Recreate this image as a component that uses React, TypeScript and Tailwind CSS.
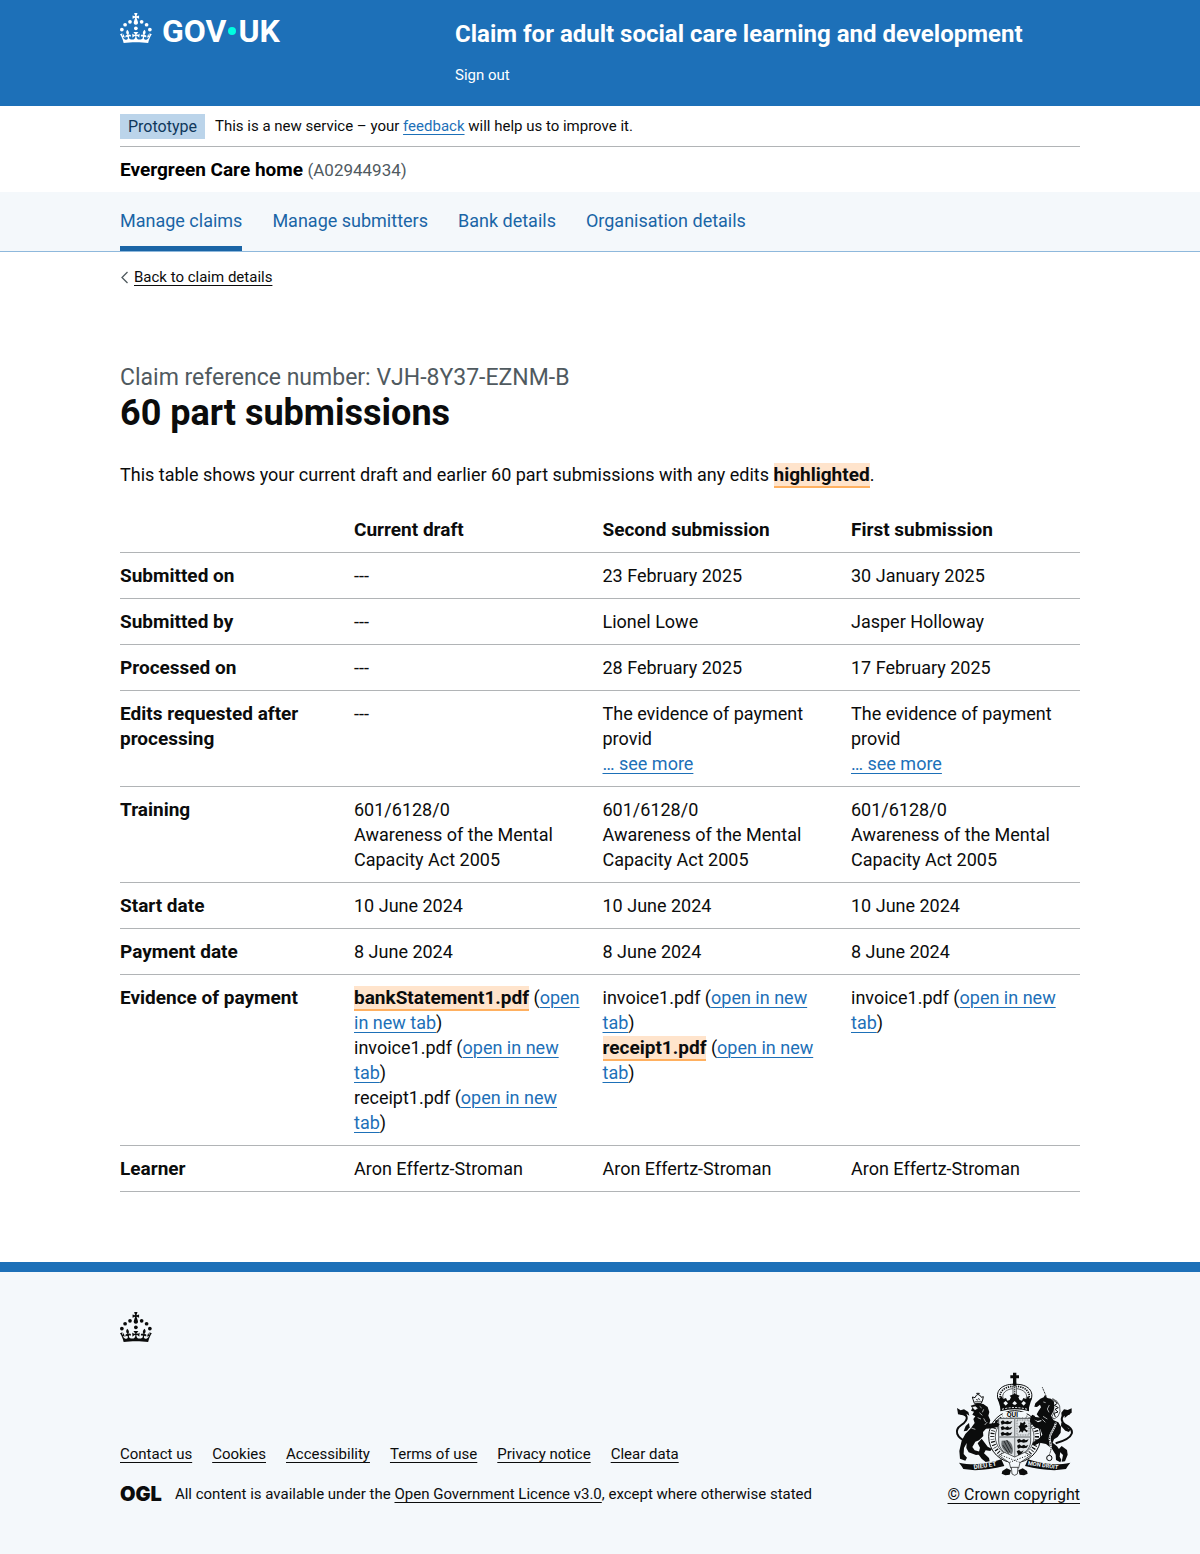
import React from 'react';

const CROWN_PATH =
  'M33.1,9.8c.2-.1.3-.3.5-.5l4.6,2.4v-6.8l-4.6,1.5c-.1-.2-.3-.3-.5-.5l1.9-5.9h-6.7l1.9,5.9c-.2.1-.3.3-.5.5l-4.6-1.5v6.8l4.6-2.4c.1.2.3.3.5.5l-2.6,8c-.9,2.8,1.2,5.7,4.1,5.7h0c3,0,5.1-2.9,4.1-5.7l-2.6-8ZM37,37.9s-3.4,3.8-4.1,6.1c2.2,0,4.2-.5,6.4-2.8l-.7,8.5c-2-2.8-4.4-4.1-5.7-3.8.1,3.1.5,6.7,5.8,7.2,3.7.3,6.7-1.5,7-3.8.4-2.6-2-4.3-3.7-1.6-1.4-4.5,2.4-6.1,4.9-3.2-1.9-4.5-1.8-7.7,2.4-10.9,3,4,2.6,7.3-1.2,11.1,2.4-1.3,6.2,0,4,4.6-1.2-2.8-3.7-2.2-4.2.2-.3,1.7.7,3.7,3,4.2,1.9.3,4.7-.9,7-5.9-1.3,0-2.4.7-3.9,1.7l2.4-8c.6,2.3,1.4,3.7,2.2,4.5.6-1.6.5-2.8,0-5.3l5,1.8c-2.6,3.6-5.2,8.7-7.3,17.5-7.4-1.1-15.7-1.7-24.5-1.7h0c-8.8,0-17.1.6-24.5,1.7-2.1-8.9-4.7-13.9-7.3-17.5l5-1.8c-.5,2.5-.6,3.7,0,5.3.8-.8,1.6-2.3,2.2-4.5l2.4,8c-1.5-1-2.6-1.7-3.9-1.7,2.3,5,5.2,6.2,7,5.9,2.3-.4,3.3-2.4,3-4.2-.5-2.4-3-3.1-4.2-.2-2.2-4.6,1.6-6,4-4.6-3.7-3.7-4.2-7.1-1.2-11.1,4.2,3.2,4.3,6.4,2.4,10.9,2.5-2.8,6.3-1.3,4.9,3.2-1.8-2.7-4.1-1-3.7,1.6.3,2.3,3.3,4.1,7,3.8,5.4-.5,5.7-4.2,5.8-7.2-1.3-.2-3.7,1-5.7,3.8l-.7-8.5c2.2,2.3,4.2,2.7,6.4,2.8-.7-2.3-4.1-6.1-4.1-6.1h10.6,0Z';

function Crown() {
  return (
    <svg viewBox="0 0 64 60" className="block h-[30px] w-8 shrink-0" fill="currentColor" aria-hidden="true">
      <circle cx="20" cy="17.6" r="3.7" />
      <circle cx="10.2" cy="23.5" r="3.7" />
      <circle cx="3.7" cy="33.2" r="3.7" />
      <circle cx="31.7" cy="30.6" r="3.7" />
      <circle cx="43.3" cy="17.6" r="3.7" />
      <circle cx="53.2" cy="23.5" r="3.7" />
      <circle cx="59.7" cy="33.2" r="3.7" />
      <path d={CROWN_PATH} />
    </svg>
  );
}

function CoatOfArms() {
  return (
    <svg viewBox="30 15 360 315" className="block h-[105px] w-[120px]" fill="#0b0c0c" aria-hidden="true">
      {/* garter */}
      <circle cx="212" cy="212" r="78" fill="#f4f8fb" stroke="#0b0c0c" strokeWidth="3" />
      <circle cx="212" cy="212" r="67" fill="none" stroke="#0b0c0c" strokeWidth="12" strokeDasharray="3 6 4 5 2 6" />
      <circle cx="212" cy="212" r="58" fill="#f4f8fb" stroke="#0b0c0c" strokeWidth="2" />
      <path d="M176 138h72v17h-72z" fill="#f4f8fb" />
      <text x="188" y="153" fontSize="21" fontWeight="700" fontFamily="Roboto, sans-serif">QUI</text>
      {/* shield */}
      <path d="M164 157h96v68c0 26-22 40-48 52-26-12-48-26-48-52z" fill="#dfe3e6" stroke="#55595c" strokeWidth="3" />
      <path d="M212 157v120M164 213h96" stroke="#8d9194" strokeWidth="4" />
      <path d="M170 167l7-4 6 5 8-4 5 4 9-3-5 8-10 2-8-2-9 3zM170 184l7-4 6 5 8-4 5 4 9-3-5 8-10 2-8-2-9 3zM170 201l7-4 6 5 8-4 5 4 9-3-5 8-10 2-8-2-9 3z" />
      <path d="M219 222l7-4 6 5 8-4 5 4 9-3-5 8-10 2-8-2-9 3zM219 239l7-4 6 5 8-4 5 4 8-3-5 8-10 2-8-2-8 3zM218 256l7-4 6 5 8-4-7 12-8 4z" />
      <path d="M219 162h36v45h-36z" fill="none" stroke="#55595c" strokeWidth="2" strokeDasharray="3 2" />
      <path d="M224 201l4-11-5-9 5-3 1-9 8 3 4-6 4 6-4 6 7-2 3 6-8 4 3 5 6 3-4 5-8-6-5 7-4-4z" />
      <path d="M173 224q-5 20 12 33l19 8q5-10 2-20-2-16-16-22z" fill="#6c7174" />
      <path d="M180 225l18 34M188 222l15 28M176 237l18 26" stroke="#25282a" strokeWidth="3" />
      {/* crown */}
      <path d="M207 20h10v8h8v9h-8v14h-10V37h-8v-9h8z" />
      <circle cx="212" cy="54" r="6" />
      <path d="M165 106C150 76 174 54 208 55M259 106c15-30-9-52-43-51" fill="none" stroke="#0b0c0c" strokeWidth="3" />
      <path d="M171 101C161 80 180 62 207 61M253 101c10-21-9-39-36-40" fill="none" stroke="#0b0c0c" strokeWidth="5" strokeDasharray="4 3" />
      <path d="M178 98C171 83 186 70 206 68M246 98c7-15-8-28-28-30" fill="none" stroke="#0b0c0c" strokeWidth="2" />
      <path d="M207 60h10v42h-10z" fill="#f4f8fb" stroke="#0b0c0c" strokeWidth="2" />
      <path d="M212 62v40" stroke="#0b0c0c" strokeWidth="4" strokeDasharray="3 3" />
      <path d="M160 94l7 4 5-8 6 9 8-3 4 8 7-2 4-8-4-5 15-6 15 6-4 5 4 8 7 2 4-8 8 3 6-9 5 8 7-4-10 34H170z" />
      <path d="M178 111l7-6 7 7-7 7zM205 112l7-7 7 7-7 7zM232 112l7-7 7 6-7 8z" fill="#f4f8fb" />
      <path d="M169 123q43-13 86 0v13q-43-12-86 0z" />
      <path d="M174 130q38-11 76 0" fill="none" stroke="#f4f8fb" strokeWidth="3" strokeDasharray="6 4" />
      {/* lion */}
      <path d="M91 112l-4-12-2-7 8 2 4-7 4-2-3-4h8l-3 4 6 3 3 5 6-2-2 10-4 10z" fill="none" stroke="#0b0c0c" strokeWidth="3" />
      <path d="M92 107h22M96 99l4 4 4-6 4 6" fill="none" stroke="#0b0c0c" strokeWidth="2" />
      <path d="M87 117l14-5 17 2 13 9 5 15-3 11 6 14-3 10 16-2 3-9 8 1-3 7 7 5-6 8-15 4-20 1-9 10 1 12-13 13-11 4-9 16 7 10 16 4 9-2-2 10-19 2-22-8-7-13 1-15-8 15-1 18 10 11-5 9-16-6-2-23 7-31 11-20 17-18 11-15-4-12 6-8-9-5 5-9-9-3 4-8-5-7z" />
      <path d="M82 186l12 4M86 124l8-2 6 5-7 4zM107 121l6 5M119 130l-4 9M106 140l9 8M101 155l10 4M119 157l6 11M122 177l8-9" stroke="#f4f8fb" strokeWidth="2" fill="#f4f8fb" />
      <path d="M74 230C34 215 30 192 52 177c26-18 18-35-4-35" fill="none" stroke="#0b0c0c" strokeWidth="6" />
      <path d="M39 126l11 7 10-3 13 8 3 11-9-6 2 11-12-6-15-3-1-8z" />
      <path d="M65 180l10-9 2 13-8 10-10 2z" />
      <path d="M113 218l18 24 13 7-5 6-14-2-5 9 15 14 2 10-12 2-12-10-10-13 5-20-7-13z" />
      {/* unicorn */}
      <path d="M295 64l18 42" stroke="#0b0c0c" strokeWidth="3" strokeDasharray="3 2" />
      <path d="M326 98l13 8 8 14 1 17-6 14-12 8-6-7 6-14-2-18z" fill="#f4f8fb" stroke="#0b0c0c" strokeWidth="2" />
      <path d="M328 102l12 10-9 6 12 7-10 5 9 8-12 4 4 11" fill="none" stroke="#0b0c0c" strokeWidth="3" />
      <path d="M289 98l10-4 4-7 6 9 12 2 9 9 1 18-4 13-6 11 8 14 14 6 8 13-1 18-9 13-11 7-4 10 13 11 10 14-2 17 5 9-3 8-13-7-1-16-11-18-18-14-19-4-14 8-9-2 4-8 16-10 11-12-6-16-19-8-12-15 1-13 6-8 8 4-3 11 12 8 11-4-8-12-7-8 6-11 7-10-3-8-9 7-8-1 3-10z" />
      <path d="M298 108l7 2M316 117l-6 12 5 10M292 157l12 12M297 151l13 8" fill="none" stroke="#f4f8fb" strokeWidth="2" />
      <path d="M265 149l10 4 17 2 4 6-15 4-13-5z" />
      <path d="M335 232C396 215 392 191 365 177c-20-14-13-34 12-34" fill="none" stroke="#0b0c0c" strokeWidth="6" />
      <path d="M383 127l-12 5-11-2-8 10 1 13 9-9v12l11-9 10-7z" />
      <path d="M351 180l1-11 14 8 8 11 8-1-7 11-11-4z" />
      <path d="M336 170c-5 25-26 35-17 60 5 18 1 25-3 36" fill="none" stroke="#f4f8fb" strokeWidth="6" />
      <path d="M336 170c-5 25-26 35-17 60 5 18 1 25-3 36" fill="none" stroke="#0b0c0c" strokeWidth="3" strokeDasharray="4 3" />
      <circle cx="316" cy="276" r="8" fill="none" stroke="#0b0c0c" strokeWidth="3" />
      <path d="M353 240l16 12 2 14-8 20-10 1 4-20-15-15z" />
      {/* belt end */}
      <path d="M164 268l18-9 30 14 30-14 18 9-32 22-4 16h-24l-4-16z" fill="#f4f8fb" stroke="#0b0c0c" strokeWidth="2" />
      <path d="M172 268l60 23M252 268l-60 23" stroke="#0b0c0c" strokeWidth="3" strokeDasharray="3 5" />
      {/* motto scroll */}
      <path d="M45 290c44 9 88 4 127-10l9 20c-31 8-60 11-88 13l-35-4-5-8z" />
      <path d="M379 290c-44 9-88 4-127-10l-9 20c31 8 60 11 88 13l35-4 5-8z" />
      <text x="90" y="310" fontSize="19" fontWeight="700" fill="#f4f8fb" fontFamily="Roboto, sans-serif" transform="rotate(-9 90 310)">DIEU ET</text>
      <text x="251" y="297" fontSize="17" fontWeight="700" fill="#f4f8fb" fontFamily="Roboto, sans-serif" transform="rotate(8 251 297)">MON DROIT</text>
      <path d="M175 315l13-8 13 6-4 13-13 2-11-5zM249 315l-13-8-13 6 4 13 13 2 11-5z" />
      <path d="M202 304h20l-2 20-8 4-8-4z" fill="#f4f8fb" stroke="#0b0c0c" strokeWidth="2" />
    </svg>
  );
}

const container = 'mx-auto w-full max-w-[960px]';
const blueLink = 'text-[#1d70b8] underline decoration-1 underline-offset-3';
const darkLink = 'text-[#0b0c0c] underline decoration-1 underline-offset-3';

function Mark({ children }: { children: React.ReactNode }) {
  return (
    <mark className="border-b-2 border-[#ffb060] bg-[#ffe4cc] text-[19px] font-bold text-[#0b0c0c]">{children}</mark>
  );
}

function Evidence({ name, changed }: { name: string; changed?: boolean }) {
  return (
    <div>
      {changed ? <Mark>{name}</Mark> : name} (
      <a href="#open" className={blueLink}>
        open in new tab
      </a>
      )
    </div>
  );
}

function EditsRequested() {
  return (
    <>
      <div>The evidence of payment provid</div>
      <a href="#more" className={blueLink}>
        … see more
      </a>
    </>
  );
}

const training = (
  <>
    <div>601/6128/0</div>
    <div>Awareness of the Mental Capacity Act 2005</div>
  </>
);

const rows: { label: string; cells: React.ReactNode[] }[] = [
  { label: 'Submitted on', cells: ['---', '23 February 2025', '30 January 2025'] },
  { label: 'Submitted by', cells: ['---', 'Lionel Lowe', 'Jasper Holloway'] },
  { label: 'Processed on', cells: ['---', '28 February 2025', '17 February 2025'] },
  { label: 'Edits requested after processing', cells: ['---', <EditsRequested />, <EditsRequested />] },
  { label: 'Training', cells: [training, training, training] },
  { label: 'Start date', cells: ['10 June 2024', '10 June 2024', '10 June 2024'] },
  { label: 'Payment date', cells: ['8 June 2024', '8 June 2024', '8 June 2024'] },
  {
    label: 'Evidence of payment',
    cells: [
      <>
        <Evidence name="bankStatement1.pdf" changed />
        <Evidence name="invoice1.pdf" />
        <Evidence name="receipt1.pdf" />
      </>,
      <>
        <Evidence name="invoice1.pdf" />
        <Evidence name="receipt1.pdf" changed />
      </>,
      <Evidence name="invoice1.pdf" />,
    ],
  },
  { label: 'Learner', cells: ['Aron Effertz-Stroman', 'Aron Effertz-Stroman', 'Aron Effertz-Stroman'] },
];

const navItems = ['Manage claims', 'Manage submitters', 'Bank details', 'Organisation details'];
const footerLinks = ['Contact us', 'Cookies', 'Accessibility', 'Terms of use', 'Privacy notice', 'Clear data'];

export default function App() {
  return (
    <div className="bg-white font-['Roboto',sans-serif] text-lg leading-[25px] text-[#0b0c0c]">
      <header className="bg-[#1d70b8] text-white">
        <div className={`${container} flex items-start pt-[13px] pb-[18px]`}>
          <div className="w-1/3">
            <a href="#home" aria-label="GOV.UK" className="flex items-center gap-[10px]">
              <Crown />
              <span className="flex h-[30px] items-center pt-[6px] text-[32px] leading-[30px] font-bold">
                GOV
                <span className="mx-[2px] size-2 rounded-full bg-[#00ffe0]" />
                UK
              </span>
            </a>
          </div>
          <div className="flex-1 pl-[15px]">
            <a href="#service" className="mt-[6px] block text-2xl leading-[30px] font-bold">
              Claim for adult social care learning and development
            </a>
            <a href="#signout" className="mt-[14px] inline-block text-[15px] leading-[25px]">
              Sign out
            </a>
          </div>
        </div>
      </header>

      <div className={container}>
        <div className="flex items-center gap-[10px] border-b border-[#b1b4b6] pt-2 pb-[7px] text-[15px]">
          <strong className="bg-[#bbd4ea] px-2 text-base leading-[25px] font-normal text-[#0f385c]">Prototype</strong>
          <span>
            This is a new service – your{' '}
            <a href="#feedback" className={blueLink}>
              feedback
            </a>{' '}
            will help us to improve it.
          </span>
        </div>
        <div className="pt-[10px] pb-[10px] leading-[25px]">
          <span className="text-[19px] font-bold text-black">Evergreen Care home</span>{' '}
          <span className="text-[17px] text-[#505a5f]">(A02944934)</span>
        </div>
      </div>

      <nav className="-mt-px border-b border-[#8eb8dc] bg-[#f4f8fb]">
        <ul className={`${container} flex gap-[30px]`}>
          {navItems.map((item, i) => (
            <li key={item} className="flex">
              <a
                href="#nav"
                className={
                  i === 0
                    ? 'border-b-5 border-[#1a65a6] pt-4 pb-[13px] text-[#1a65a6]'
                    : 'pt-4 pb-[18px] text-[#1a65a6]'
                }
              >
                {item}
              </a>
            </li>
          ))}
        </ul>
      </nav>

      <main className={container}>
        <a href="#back" className="mt-[13px] flex items-center gap-1 text-[15px]">
          <svg viewBox="0 0 10 14" className="h-[14px] w-[10px]" fill="none" stroke="#505a5f" strokeWidth="1.3" aria-hidden="true">
            <path d="M7.5 1 2 6.500l5.500 5.500" />
          </svg>
          <span className={darkLink}>Back to claim details</span>
        </a>

        <div className="mt-[73px] text-[23px] leading-[30px] text-[#505a5f]">Claim reference number: VJH-8Y37-EZNM-B</div>
        <h1 className="text-4xl leading-10 font-bold">60 part submissions</h1>

        <p className="mt-[29px]">
          This table shows your current draft and earlier 60 part submissions with any edits <Mark>highlighted</Mark>.
        </p>

        <table className="mt-5 w-full table-fixed border-collapse text-left">
          <colgroup>
            <col className="w-[234px]" />
            <col />
            <col />
            <col className="w-[229px]" />
          </colgroup>
          <thead>
            <tr className="border-b border-[#b1b4b6]">
              <td />
              {['Current draft', 'Second submission', 'First submission'].map((h) => (
                <th key={h} scope="col" className="py-[10px] pr-5 text-[19px] font-bold last:pr-0">
                  {h}
                </th>
              ))}
            </tr>
          </thead>
          <tbody>
            {rows.map((row) => (
              <tr key={row.label} className="border-b border-[#b1b4b6] align-top">
                <th scope="row" className="py-[10px] pr-5 text-[19px] font-bold">
                  {row.label}
                </th>
                {row.cells.map((cell, i) => (
                  <td key={i} className="py-[10px] pr-5 last:pr-0">
                    {cell}
                  </td>
                ))}
              </tr>
            ))}
          </tbody>
        </table>
      </main>

      <footer className="mt-[70px] border-t-10 border-[#1d70b8] bg-[#f4f8fb] pt-10 pb-[47px] text-[15px]">
        <div className={container}>
          <Crown />
          <div className="mt-[29px] flex items-end justify-between">
            <div>
              <ul className="flex gap-5">
                {footerLinks.map((link) => (
                  <li key={link}>
                    <a href="#footer" className={darkLink}>
                      {link}
                    </a>
                  </li>
                ))}
              </ul>
              <div className="mt-[15px] flex items-center gap-[13px]">
                <span className="font-['Inter',sans-serif] text-[20px] font-black">OGL</span>
                <span>
                  All content is available under the{' '}
                  <a href="#licence" className={darkLink}>
                    Open Government Licence v3.0
                  </a>
                  , except where otherwise stated
                </span>
              </div>
            </div>
            <a href="#copyright" className={`${darkLink} flex flex-col items-center gap-[6px] text-base leading-[25px]`}>
              <CoatOfArms />
              <span>© Crown copyright</span>
            </a>
          </div>
        </div>
      </footer>
    </div>
  );
}
